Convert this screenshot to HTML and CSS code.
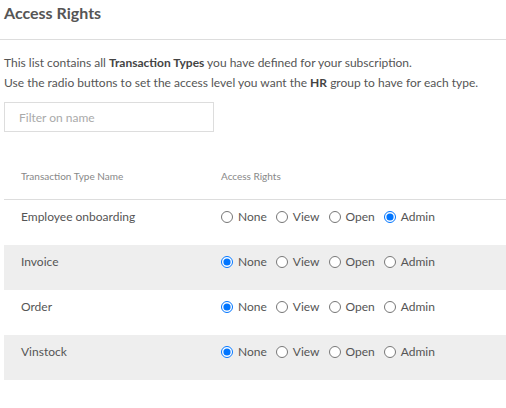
FILE: index.html
```html
<!DOCTYPE html>
<html>
<head>
<meta charset="utf-8">
<link rel="stylesheet" href="styles.css">
</head>
<body>
<div class="header"><h1 class="title">Access Rights</h1></div>
<div class="content">
  <p class="intro">This list contains all <b>Transaction Types</b> you have defined for your subscription.<br>Use the radio buttons to set the access level you want the <b>HR</b> group to have for each type.</p>
  <input class="filter" type="text" placeholder="Filter on name">
  <div class="table">
    <div class="thead">
      <div class="col-name">Transaction Type Name</div>
      <div class="col-rights">Access Rights</div>
    </div>
    <div class="row">
      <div class="col-name">Employee onboarding</div>
      <div class="col-rights radios">
        <label class="opt"><input type="radio" name="r1">None</label>
        <label class="opt"><input type="radio" name="r1">View</label>
        <label class="opt"><input type="radio" name="r1">Open</label>
        <label class="opt"><input type="radio" name="r1" checked>Admin</label>
      </div>
    </div>
    <div class="row alt">
      <div class="col-name">Invoice</div>
      <div class="col-rights radios">
        <label class="opt"><input type="radio" name="r2" checked>None</label>
        <label class="opt"><input type="radio" name="r2">View</label>
        <label class="opt"><input type="radio" name="r2">Open</label>
        <label class="opt"><input type="radio" name="r2">Admin</label>
      </div>
    </div>
    <div class="row">
      <div class="col-name">Order</div>
      <div class="col-rights radios">
        <label class="opt"><input type="radio" name="r3" checked>None</label>
        <label class="opt"><input type="radio" name="r3">View</label>
        <label class="opt"><input type="radio" name="r3">Open</label>
        <label class="opt"><input type="radio" name="r3">Admin</label>
      </div>
    </div>
    <div class="row alt">
      <div class="col-name">Vinstock</div>
      <div class="col-rights radios">
        <label class="opt"><input type="radio" name="r4" checked>None</label>
        <label class="opt"><input type="radio" name="r4">View</label>
        <label class="opt"><input type="radio" name="r4">Open</label>
        <label class="opt"><input type="radio" name="r4">Admin</label>
      </div>
    </div>
  </div>
</div>
</body>
</html>
```
FILE: styles.css
```css
html, body {
  margin: 0;
  padding: 0;
  background: #fff;
}
body {
  font-family: Lato, "Open Sans", sans-serif;
  color: #555;
  font-size: 12px;
}
.header {
  height: 40px;
  border-bottom: 1px solid #dddddd;
  box-sizing: border-box;
  padding: 0 4px;
}
.title {
  margin: 0;
  font-size: 16px;
  font-weight: 700;
  line-height: 25px;
  color: #555;
}
.content {
  padding-left: 4px;
}
.intro {
  margin: 13px 0 0;
  line-height: 20px;
}
.intro b {
  font-weight: 700;
  color: #444;
}
.filter {
  display: block;
  margin: 9px 0 0;
  width: 210px;
  height: 30px;
  box-sizing: border-box;
  border: 1px solid #dddddd;
  padding: 0 14px;
  font-family: inherit;
  font-size: 12px;
  color: #555;
  outline: none;
}
.filter::placeholder {
  color: #aaa;
}
.table {
  margin-top: 36px;
}
.thead {
  display: flex;
  padding: 0 0 15px 17px;
  font-size: 10px;
  line-height: 16px;
  color: #888;
  border-bottom: 1px solid #dddddd;
}
.row {
  display: flex;
  align-items: flex-start;
  height: 45px;
  box-sizing: border-box;
  padding: 7px 0 0 17px;
  line-height: 20px;
}
.row.alt {
  background: #eeeeee;
}
.col-name {
  width: 200px;
  flex: none;
}
.radios {
  display: flex;
  align-items: flex-start;
  gap: 9px;
}
.opt {
  display: flex;
  align-items: center;
  gap: 5px;
  height: 20px;
}
.opt input {
  margin: 0;
  width: 12px;
  height: 12px;
}
```
